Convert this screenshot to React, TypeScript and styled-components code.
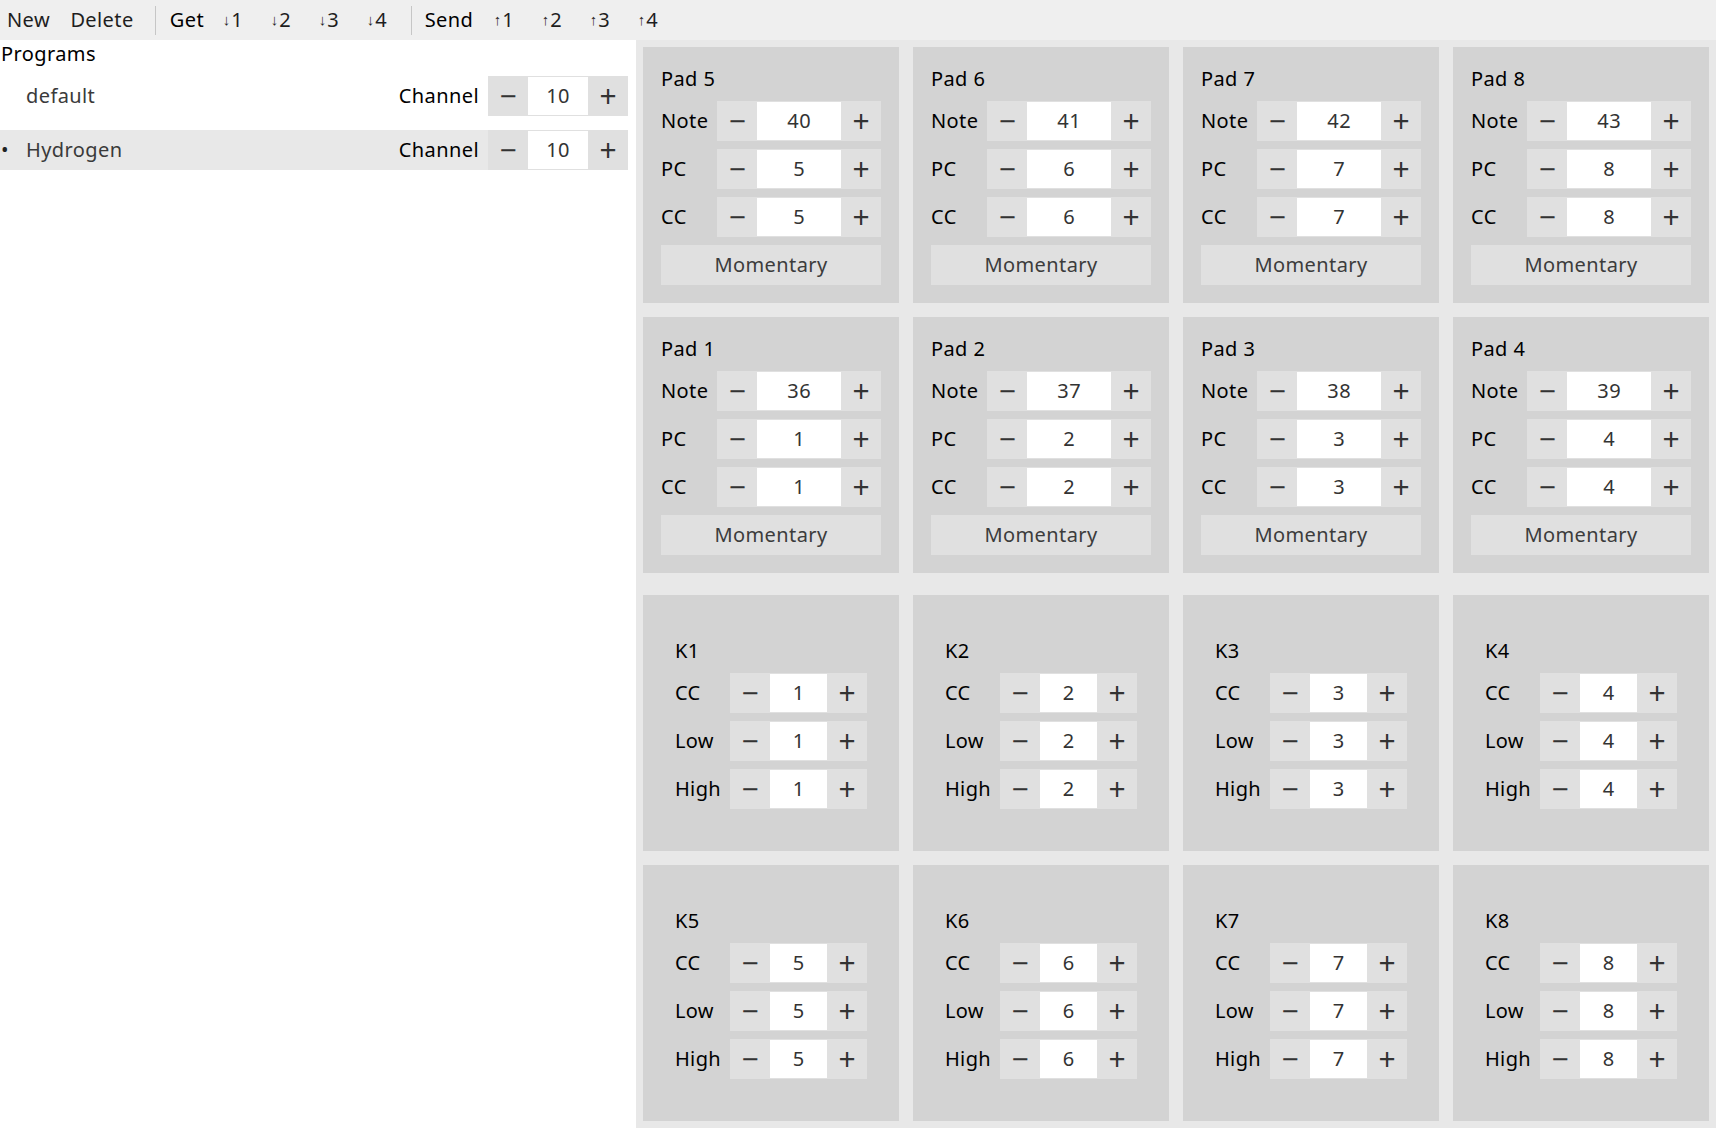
import React from 'react';
import styled, { createGlobalStyle } from 'styled-components';

const GlobalStyle = createGlobalStyle`
  html, body {
    margin: 0;
    padding: 0;
  }
  body {
    font-family: "Noto Sans", "Open Sans", sans-serif;
    font-size: 20px;
    letter-spacing: 0.4px;
    color: #000;
    background: #e8e8e8;
  }
  * {
    box-sizing: border-box;
  }
`;

const Window = styled.div`
  width: 1716px;
  height: 1128px;
  display: flex;
  flex-direction: column;
  overflow: hidden;
`;

const Toolbar = styled.div`
  height: 40px;
  flex: none;
  display: flex;
  align-items: center;
  background: #efefef;
`;

interface IToolButtonProps {
  $w: number;
  $strong?: boolean;
}

const ToolButton = styled.div<IToolButtonProps>`
  width: ${(p) => p.$w}px;
  height: 40px;
  display: flex;
  align-items: center;
  justify-content: center;
  line-height: 28px;
  white-space: nowrap;
  color: ${(p) => (p.$strong ? '#000' : '#1e1e1e')};
`;

const Arrow = styled.span`
  font-family: "Liberation Sans", sans-serif;
  font-size: 15px;
  letter-spacing: 0;
  margin-right: 1px;
  color: #2a2a2a;
`;

interface ISeparatorProps {
  $left: number;
  $right: number;
}

const Separator = styled.div<ISeparatorProps>`
  width: 1px;
  height: 29px;
  background: #c6c6c6;
  margin: 0 ${(p) => p.$right}px 0 ${(p) => p.$left}px;
`;

const Main = styled.div`
  flex: 1;
  display: flex;
  min-height: 0;
`;

const Sidebar = styled.div`
  width: 636px;
  flex: none;
  background: #fff;
`;

const SectionLabel = styled.div`
  height: 28px;
  line-height: 28px;
  margin-bottom: 8px;
  padding-left: 1px;
`;

const ProgramList = styled.div`
  width: 628px;
  display: flex;
  flex-direction: column;
  gap: 14px;
`;

const ProgramRow = styled.div<{ $active?: boolean }>`
  height: 40px;
  display: flex;
  align-items: center;
  line-height: 28px;
  background: ${(p) => (p.$active ? '#e8e8e8' : 'transparent')};
`;

const Bullet = styled.span`
  width: 26px;
  flex: none;
  padding-left: 1px;
  color: #222;
`;

const ProgramName = styled.span`
  flex: 1;
  color: #3a3a3a;
`;

const FieldLabel = styled.span`
  margin-right: 9px;
`;

const Stepper = styled.div<{ $value?: number }>`
  display: grid;
  grid-template-columns: 40px ${(p) => (p.$value ? `${p.$value}px` : '1fr')} 40px;
  height: 40px;
  background: #e0e0e0;
`;

const StepButton = styled.div`
  display: flex;
  align-items: center;
  justify-content: center;
  color: #333;
  font-size: 30px;
  line-height: 40px;
  letter-spacing: 0;
`;

const StepValue = styled.div`
  margin: 1px 0;
  background: #fff;
  display: flex;
  align-items: center;
  justify-content: center;
  line-height: 28px;
  color: #333;
`;

const Board = styled.div`
  flex: 1;
  padding: 7px;
  display: flex;
  flex-direction: column;
  gap: 22px;
  background: #e8e8e8;
`;

const CardGrid = styled.div`
  display: grid;
  grid-template-columns: repeat(4, 256px);
  grid-auto-rows: 256px;
  gap: 14px;
`;

const Card = styled.div`
  background: #d3d3d3;
  padding: 18px;
`;

const KnobCard = styled(Card)`
  display: flex;
  align-items: center;
  justify-content: center;
`;

const PadBody = styled.div`
  display: grid;
  grid-template-columns: auto 1fr;
  column-gap: 9px;
  row-gap: 8px;
  align-items: center;
`;

const KnobBody = styled.div`
  display: grid;
  grid-template-columns: auto auto;
  column-gap: 9px;
  row-gap: 8px;
  align-items: center;
`;

const CardTitle = styled.div`
  grid-column: 1 / -1;
  height: 28px;
  line-height: 28px;
`;

const RowLabel = styled.div`
  line-height: 28px;
`;

const ModeButton = styled.div`
  grid-column: 1 / -1;
  height: 40px;
  background: #e0e0e0;
  display: flex;
  align-items: center;
  justify-content: center;
  line-height: 28px;
  color: #3c3c3c;
`;

interface ISpinProps {
  value: number;
  width?: number;
}

const Spin = ({ value, width }: ISpinProps) => (
  <Stepper $value={width}>
    <StepButton>−</StepButton>
    <StepValue>{value}</StepValue>
    <StepButton>+</StepButton>
  </Stepper>
);

interface IPad {
  n: number;
  note: number;
  pc: number;
  cc: number;
}

const PadCard = ({ n, note, pc, cc }: IPad) => (
  <Card>
    <PadBody>
      <CardTitle>Pad {n}</CardTitle>
      <RowLabel>Note</RowLabel>
      <Spin value={note} />
      <RowLabel>PC</RowLabel>
      <Spin value={pc} />
      <RowLabel>CC</RowLabel>
      <Spin value={cc} />
      <ModeButton>Momentary</ModeButton>
    </PadBody>
  </Card>
);

const Knob = ({ n }: { n: number }) => (
  <KnobCard>
    <KnobBody>
      <CardTitle>K{n}</CardTitle>
      <RowLabel>CC</RowLabel>
      <Spin value={n} width={57} />
      <RowLabel>Low</RowLabel>
      <Spin value={n} width={57} />
      <RowLabel>High</RowLabel>
      <Spin value={n} width={57} />
    </KnobBody>
  </KnobCard>
);

const topPads = [5, 6, 7, 8];
const bottomPads = [1, 2, 3, 4];

const programs = [
  { name: 'default', channel: 10, active: false },
  { name: 'Hydrogen', channel: 10, active: true },
];

const App = () => {
  return (
    <Window>
      <GlobalStyle />
      <Toolbar>
        <ToolButton $w={57}>New</ToolButton>
        <ToolButton $w={90}>Delete</ToolButton>
        <Separator $left={8} $right={9} />
        <ToolButton $w={44} $strong>
          Get
        </ToolButton>
        {[1, 2, 3, 4].map((i) => (
          <ToolButton $w={48} key={`get${i}`}>
            <Arrow>↓</Arrow>
            {i}
          </ToolButton>
        ))}
        <Separator $left={10} $right={6} />
        <ToolButton $w={62} $strong>
          Send
        </ToolButton>
        {[1, 2, 3, 4].map((i) => (
          <ToolButton $w={48} key={`send${i}`}>
            <Arrow>↑</Arrow>
            {i}
          </ToolButton>
        ))}
      </Toolbar>
      <Main>
        <Sidebar>
          <SectionLabel>Programs</SectionLabel>
          <ProgramList>
            {programs.map((p) => (
              <ProgramRow $active={p.active} key={p.name}>
                <Bullet>{p.active ? '•' : ''}</Bullet>
                <ProgramName>{p.name}</ProgramName>
                <FieldLabel>Channel</FieldLabel>
                <Spin value={p.channel} width={60} />
              </ProgramRow>
            ))}
          </ProgramList>
        </Sidebar>
        <Board>
          <CardGrid>
            {topPads.concat(bottomPads).map((n) => (
              <PadCard key={n} n={n} note={35 + n} pc={n} cc={n} />
            ))}
          </CardGrid>
          <CardGrid>
            {[1, 2, 3, 4, 5, 6, 7, 8].map((n) => (
              <Knob key={n} n={n} />
            ))}
          </CardGrid>
        </Board>
      </Main>
    </Window>
  );
};

export default App;
